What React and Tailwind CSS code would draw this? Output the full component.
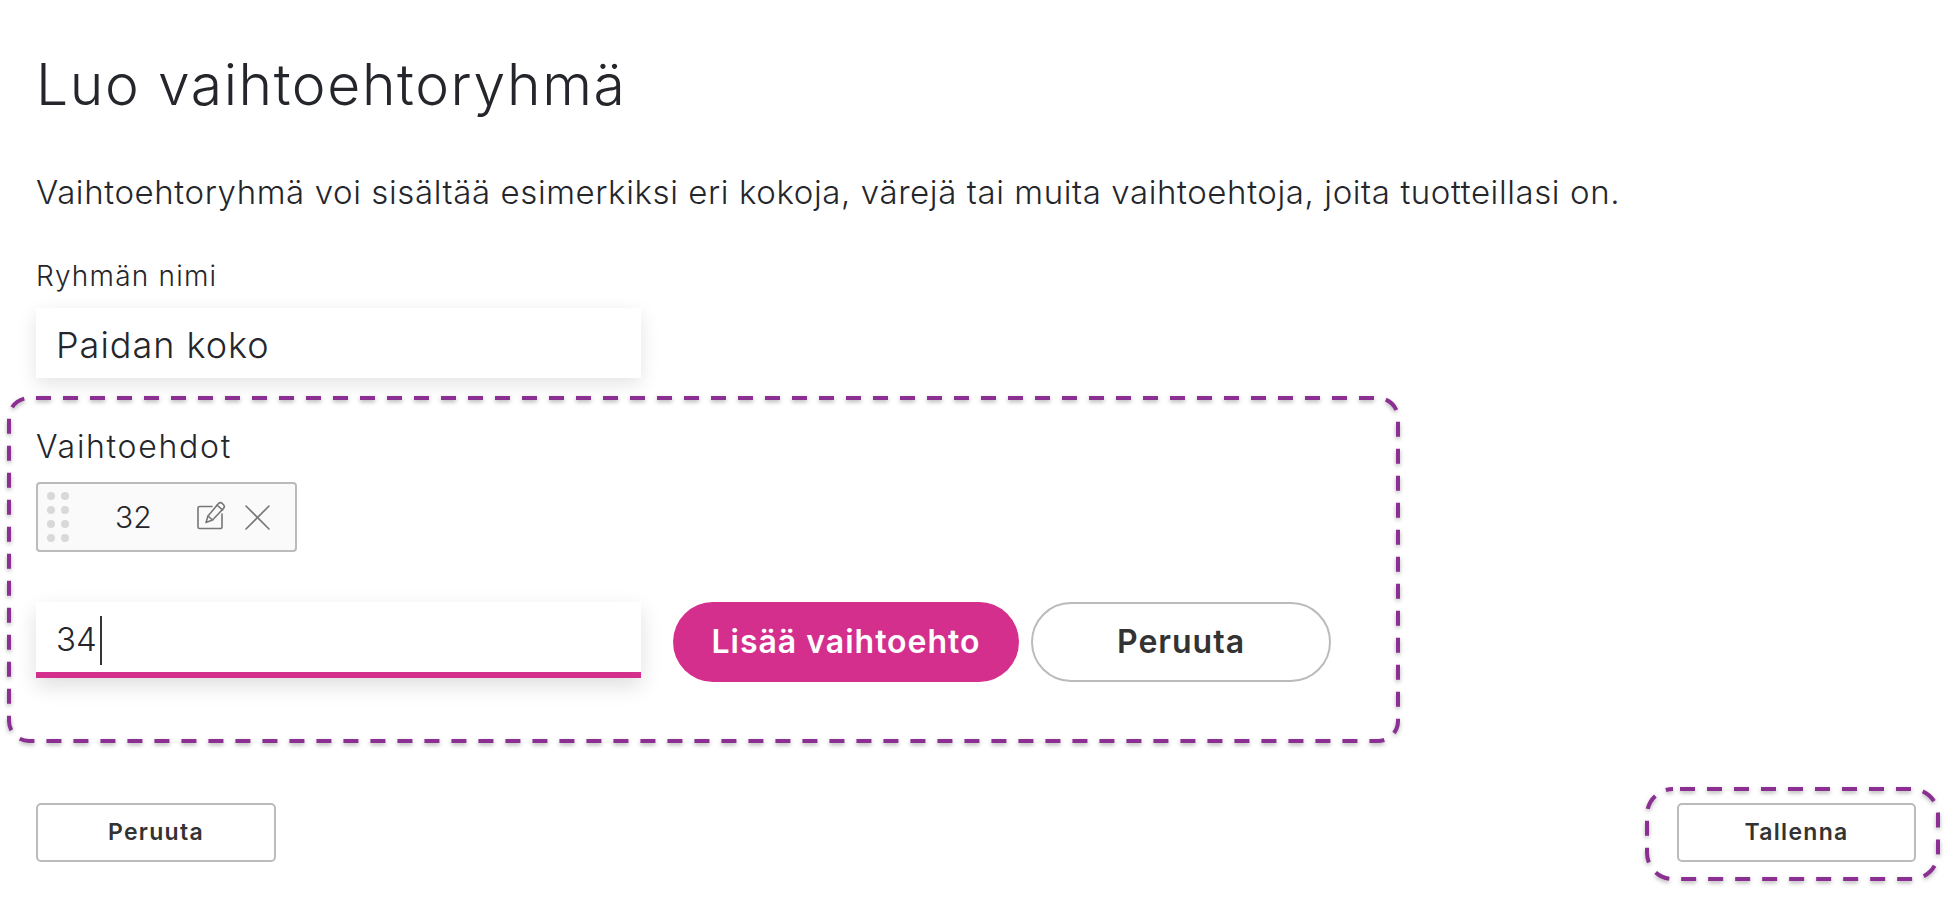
const font = "font-['Inter','Noto_Sans',sans-serif]";

function Dashed({ w, h, r, offset }) {
  return (
    <svg
      className="absolute top-0 left-0 overflow-visible pointer-events-none drop-shadow-[0_2px_2px_rgba(0,0,0,0.3)]"
      width={w}
      height={h}
      viewBox={`0 0 ${w} ${h}`}
      fill="none"
    >
      <rect
        x="0"
        y="0"
        width={w}
        height={h}
        rx={r}
        stroke="#8b2f92"
        strokeWidth="4"
        strokeDasharray="15 12"
        strokeDashoffset={offset}
      />
    </svg>
  );
}

function EditIcon() {
  return (
    <svg width="29" height="29" viewBox="0 0 29 29" fill="none" stroke="#777" strokeWidth="1.6" strokeLinejoin="round" strokeLinecap="round">
      <path d="M15 5.5H2.5a1.5 1.5 0 0 0-1.5 1.5v19a1.5 1.5 0 0 0 1.5 1.5h21a1.5 1.5 0 0 0 1.5-1.5V13" />
      <path d="M21.5 2.5a2.6 2.6 0 0 1 3.8 0l1.2 1.3a2.6 2.6 0 0 1 0 3.6L15.5 19l-6.5 2.5L11 15z" />
      <path d="M11 15l4.5 4M20 4l5.5 5" />
    </svg>
  );
}

function CloseIcon() {
  return (
    <svg width="25" height="25" viewBox="0 0 25 25" fill="none" stroke="#777" strokeWidth="1.6" strokeLinecap="round">
      <path d="M1 1l23 23M24 1L1 24" />
    </svg>
  );
}

function Dots() {
  return (
    <div className="grid grid-cols-2 gap-x-[6px] gap-y-[6px]">
      {Array.from({ length: 8 }).map((_, i) => (
        <span key={i} className="w-[8px] h-[8px] rounded-full bg-[#d9d9d9]" />
      ))}
    </div>
  );
}

export default function App() {
  return (
    <div className={`${font} relative w-full h-[900px] overflow-hidden bg-white text-[#24262b] px-[36px] font-[260]`}>
      <h1 className="pt-[48px] text-[57px] leading-[74px] font-[260] tracking-[1.6px] whitespace-nowrap">
        Luo vaihtoehtoryhmä
      </h1>
      <p className="mt-[48px] text-[33px] leading-[44px] font-[260] tracking-[0.6px] whitespace-nowrap">
        Vaihtoehtoryhmä voi sisältää esimerkiksi eri kokoja, värejä tai muita vaihtoehtoja, joita tuotteillasi on.
      </p>
      <label className="block mt-[43px] text-[28px] leading-[38px] tracking-[1.2px] font-[260]">Ryhmän nimi</label>
      <div className="mt-[13px] w-[605px] h-[70px] flex items-center px-[20px] pt-[4px] bg-white shadow-[0_6px_18px_rgba(0,0,0,0.11)] text-[36px] tracking-[1px] font-[260]">
        Paidan koko
      </div>

      <section className="relative mt-[20px] -ml-[27px] w-[1389px] h-[343px] pl-[27px]">
        <Dashed w={1389} h={343} r={20} offset={-7} />
        <div className="pt-[28px] text-[32px] leading-[42px] tracking-[1.7px] font-[260]">Vaihtoehdot</div>
        <div className="mt-[14px] w-[261px] h-[70px] flex items-center bg-[#fafafa] border-2 border-[#bbbbbb] rounded-[4px] pl-[9px]">
          <Dots />
          <span className="ml-[46px] w-[36px] text-center text-[30px] font-[260]">32</span>
          <span className="ml-[46px] -mt-[3px] flex"><EditIcon /></span>
          <span className="ml-[19px] flex"><CloseIcon /></span>
        </div>
        <div className="mt-[50px] flex items-start">
          <div className="w-[605px] h-[76px] flex items-center px-[20px] pt-[6px] bg-white border-b-[6px] border-[#d52f8e] shadow-[0_8px_20px_rgba(0,0,0,0.13)] text-[33px] font-[260]">
            34<span className="ml-[3px] w-[2px] h-[49px] bg-[#333]" />
          </div>
          <button className="ml-[32px] w-[346px] h-[80px] rounded-[40px] bg-[#d52f8e] text-white text-[32px] tracking-[1px] font-semibold">
            Lisää vaihtoehto
          </button>
          <button className="ml-[12px] w-[300px] h-[80px] rounded-[40px] border-2 border-[#bbbbbb] bg-white text-[#333] text-[32px] tracking-[1px] font-semibold">
            Peruuta
          </button>
        </div>
      </section>

      <div className="mt-[62px] flex justify-between pr-[4px]">
        <button className="w-[240px] h-[59px] rounded-[5px] border-2 border-[#bbbbbb] bg-white text-[#333] text-[23px] tracking-[1.3px] font-semibold">
          Peruuta
        </button>
        <div className="relative">
          <button className="w-[239px] h-[59px] rounded-[5px] border-2 border-[#bbbbbb] bg-white text-[#333] text-[23px] tracking-[1.3px] font-semibold">
            Tallenna
          </button>
          <span className="absolute -top-[14px] -left-[30px]">
            <Dashed w={291} h={90} r={26} offset={-7} />
          </span>
        </div>
      </div>
    </div>
  );
}
